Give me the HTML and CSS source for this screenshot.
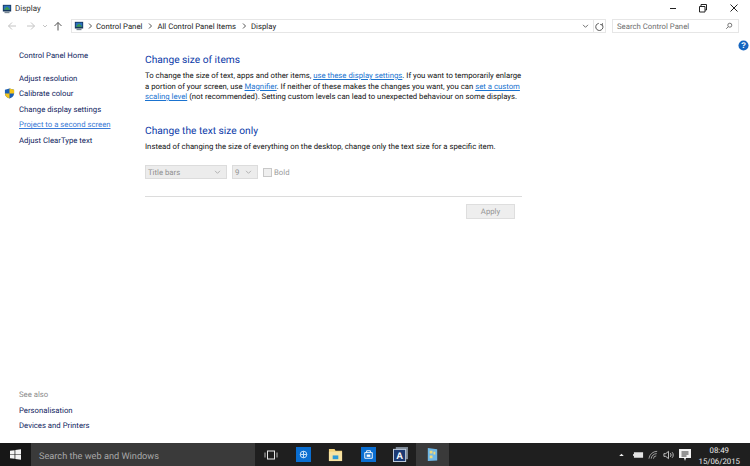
FILE: index.html

```html
<!DOCTYPE html>
<html lang="en">
<head>
<meta charset="UTF-8">
<meta name="viewport" content="width=device-width, initial-scale=1.0">
<title>Display</title>
<link rel="stylesheet" href="styles.css">
</head>
<body>

<div class="window">
    <div class="titlebar">
        <div class="title">
            <svg class="app-icon" viewBox="0 0 12 12"><rect x="1" y="1" width="10" height="8" fill="#17375e"/><rect x="2" y="2" width="8" height="5" fill="#2a6fc0"/><path d="M2 7L6 3l4 4z" fill="#3f9a4a"/><rect x="3" y="9" width="6" height="2" fill="#7a8794"/></svg>
            <span>Display</span>
        </div>
        <div class="win-controls">
            <svg viewBox="0 0 10 10"><path d="M3 5.5h6" stroke="#222" fill="none"/></svg>
            <svg viewBox="0 0 10 10"><path d="M1.500 3.500h5.500v5.500h-5.500zM3 3.500v-2h5.500v5.500h-1.500" stroke="#222" fill="none"/></svg>
            <svg viewBox="0 0 10 10"><path d="M1.500 1.500l7 7M8.500 1.500l-7 7" stroke="#222" fill="none"/></svg>
        </div>
    </div>

    <div class="navbar">
        <div class="nav-arrows">
            <svg class="arrow" viewBox="0 0 10 10"><path d="M9 5H1.500M5 1.500L1.500 5 5 8.500" stroke="#c4c4c4" fill="none"/></svg>
            <svg class="arrow" viewBox="0 0 10 10"><path d="M1 5h7.500M5 1.500L8.500 5 5 8.500" stroke="#c4c4c4" fill="none"/></svg>
            <svg class="arrow-small" viewBox="0 0 6 6"><path d="M1 2l2 2 2-2" stroke="#c4c4c4" fill="none"/></svg>
            <svg class="arrow" viewBox="0 0 10 10"><path d="M5 9.500V1.500M1.500 5L5 1.500 8.500 5" stroke="#555" fill="none"/></svg>
        </div>
        <div class="address">
            <svg class="app-icon" viewBox="0 0 12 12"><rect x="1" y="1" width="10" height="8" fill="#17375e"/><rect x="2" y="2" width="8" height="5" fill="#2a6fc0"/><path d="M2 7L6 3l4 4z" fill="#3f9a4a"/><rect x="3" y="9" width="6" height="2" fill="#7a8794"/></svg>
            <svg class="crumb-sep first-sep" viewBox="0 0 4 6"><path d="M1 .5L3.500 3 1 5.500" stroke="#555" fill="none"/></svg>
            <span>Control Panel</span>
            <svg class="crumb-sep" viewBox="0 0 4 6"><path d="M1 .5L3.500 3 1 5.500" stroke="#555" fill="none"/></svg>
            <span>All Control Panel Items</span>
            <svg class="crumb-sep" viewBox="0 0 4 6"><path d="M1 .5L3.500 3 1 5.500" stroke="#555" fill="none"/></svg>
            <span>Display</span>
            <svg class="addr-drop" viewBox="0 0 8 6"><path d="M1 1l3 3 3-3" stroke="#555" fill="none"/></svg>
        </div>
        <div class="refresh">
            <svg viewBox="0 0 10 10"><path d="M3 2a4 4 0 1 0 4 0M7 0.500v2h-2" stroke="#555" fill="none" transform="rotate(20 5 5)"/></svg>
        </div>
        <div class="search">
            <span>Search Control Panel</span>
            <svg viewBox="0 0 10 10"><circle cx="6" cy="4" r="2.500" stroke="#555" fill="none"/><path d="M4 6L1.500 8.500" stroke="#555" fill="none"/></svg>
        </div>
    </div>

    <div class="body-row">
        <aside class="sidebar">
            <div>
                <a class="side-link home-link">Control Panel Home</a>
                <a class="side-link">Adjust resolution</a>
                <a class="side-link shield-link">
                    <svg class="shield" viewBox="0 0 12 12"><path d="M6 .5L11 2v4c0 3-2.500 4.500-5 5.500C3.500 10.500 1 9 1 6V2z" fill="#1c5fb4"/><path d="M6 .5L11 2v4H6zM6 6v5.500C3.500 10.500 1 9 1 6z" fill="#f5c518"/></svg>
                    Calibrate colour
                </a>
                <a class="side-link">Change display settings</a>
                <a class="side-link hover-link">Project to a second screen</a>
                <a class="side-link">Adjust ClearType text</a>
            </div>
            <div>
                <div class="see-also">See also</div>
                <a class="side-link">Personalisation</a>
                <a class="side-link">Devices and Printers</a>
            </div>
        </aside>

        <main class="content">
            <h2>Change size of items</h2>
            <p>To change the size of text, apps and other items, <a>use these display settings</a>. If you want to temporarily enlarge<br>a portion of your screen, use <a>Magnifier</a>. If neither of these makes the changes you want, you can <a>set a custom</a><br><a>scaling level</a> (not recommended). Setting custom levels can lead to unexpected behaviour on some displays.</p>

            <h2 class="second">Change the text size only</h2>
            <p>Instead of changing the size of everything on the desktop, change only the text size for a specific item.</p>

            <div class="controls">
                <div class="select item-select"><span>Title bars</span><svg viewBox="0 0 8 6"><path d="M1 1l3 3 3-3" stroke="#a8a8a8" fill="none"/></svg></div>
                <div class="select size-select"><span>9</span><svg viewBox="0 0 8 6"><path d="M1 1l3 3 3-3" stroke="#a8a8a8" fill="none"/></svg></div>
                <span class="checkbox"></span>
                <span class="bold-label">Bold</span>
            </div>

            <div class="rule"></div>
            <div class="apply-row"><div class="apply">Apply</div></div>
        </main>

        <svg class="help" viewBox="0 0 12 12"><circle cx="6" cy="6" r="5.500" fill="#1565c0"/><text x="6" y="9.200" text-anchor="middle" font-size="9" font-weight="700" fill="#fff" font-family="Liberation Sans, sans-serif">?</text></svg>
    </div>
</div>

<footer class="taskbar">
    <div class="start">
        <svg viewBox="0 0 12 12"><path d="M0 2l5-.7v4.400H0zM5.800 1.200L12 .3v5.400H5.800zM0 6.300h5v4.400l-5-.7zM5.800 6.300H12v5.400l-6.200-.9z" fill="#f2f2f2"/></svg>
    </div>
    <div class="cortana">Search the web and Windows</div>
    <div class="task-icons">
        <div class="task-slot">
            <svg class="task-view" viewBox="0 0 14 10"><rect x="3.500" y="1" width="7" height="8" stroke="#e8e8e8" fill="none"/><path d="M1 2.500v5M13 2.500v5" stroke="#bbb" fill="none"/></svg>
        </div>
        <div class="task-slot">
            <svg viewBox="0 0 16 16"><rect width="16" height="16" fill="#0a6ed1"/><circle cx="8" cy="8" r="3.500" stroke="#cfe4fa" fill="none"/><path d="M4.500 8h7M8 4.500v7" stroke="#cfe4fa" fill="none"/></svg>
        </div>
        <div class="task-slot">
            <svg viewBox="0 0 16 16"><path d="M1 2h6l1 2h7v11H1z" fill="#f3d27a"/><rect x="1" y="5" width="14" height="10" fill="#f8e3a2"/><rect x="5" y="9" width="6" height="4" fill="#2f9bd8"/></svg>
        </div>
        <div class="task-slot">
            <svg viewBox="0 0 16 16"><rect width="16" height="16" fill="#0a6ed1"/><path d="M4 6h8v6H4zM6 6V4h4v2" stroke="#fff" fill="none"/><rect x="6" y="8" width="4" height="2.500" fill="#fff"/></svg>
        </div>
        <div class="task-slot">
            <svg viewBox="0 0 16 16"><rect x="3" y="0" width="13" height="13" fill="#7c8794"/><rect x="0.500" y="2.500" width="13" height="13" fill="#1c3a73" stroke="#c7d3e3"/><text x="7" y="12.500" text-anchor="middle" font-size="10" font-weight="700" fill="#fff" font-family="Liberation Sans, sans-serif">A</text></svg>
        </div>
        <div class="task-slot active-slot">
            <svg viewBox="0 0 16 16"><path d="M3 1l10 1.500v12L3 15z" fill="#6fb7e6"/><path d="M5 4h3v3H5zM9 5h2v3H9zM5 9h3v3H5z" fill="#f0d878"/></svg>
        </div>
    </div>
    <div class="tray">
        <svg class="tray-up" viewBox="0 0 6 4"><path d="M0 4l3-3 3 3z" fill="#eee"/></svg>
        <svg class="tray-icon" viewBox="0 0 12 8"><rect x="1" y="1" width="10" height="6" fill="#e4e4e4"/><rect y="3" width="1" height="2" fill="#e4e4e4"/></svg>
        <svg class="tray-icon" viewBox="0 0 12 10"><path d="M1 9a9 9 0 0 1 9-8M3.500 9a6 6 0 0 1 6-5.500M6 9a3 3 0 0 1 3-3" stroke="#aaa" fill="none"/></svg>
        <svg class="tray-icon" viewBox="0 0 12 10"><path d="M1 3.500h2l3-2.500v8L3 6.500H1zM8 3c1 1 1 3 0 4M10 2c1.500 1.500 1.500 4.500 0 6" stroke="#ccc" fill="none"/></svg>
        <svg class="tray-note" viewBox="0 0 12 12"><path d="M0 0h12v9H7l-1 3-1-3H0z" fill="#f2f2f2"/><path d="M2.500 3h7M2.500 5h7M2.500 7h5" stroke="#333" fill="none"/></svg>
        <div class="clock"><div>08:49</div><div>15/06/2015</div></div>
    </div>
</footer>

</body>
</html>
```

FILE: styles.css

```css
body { margin: 0; display: flex; flex-direction: column; height: 466px; overflow: hidden; background: #fff; font-family: 'Roboto', sans-serif; font-size: 7.75px; color: #1a1a1a; text-rendering: geometricPrecision; }
svg { display: block; }

.window { flex: 1; display: flex; flex-direction: column; min-height: 0; }

.titlebar { height: 16px; display: flex; justify-content: space-between; align-items: center; }
.title { display: flex; align-items: center; gap: 3px; padding-left: 2px; margin-top: 1px; color: #333; font-size: 8px; }
.app-icon { width: 10px; height: 10px; flex: none; }
.win-controls { display: flex; gap: 21px; padding-right: 11px; }
.win-controls svg { width: 10px; height: 10px; }

.navbar { height: 16px; margin-top: 2px; display: flex; align-items: center; }
.nav-arrows { display: flex; align-items: center; width: 71px; padding-left: 7px; box-sizing: border-box; }
.arrow { width: 10px; height: 10px; flex: none; }
.nav-arrows .arrow:nth-child(2) { margin-left: 9px; }
.arrow-small { width: 6px; height: 6px; margin: 0 5px 0 6px; }
.address { width: 523px; height: 14px; box-sizing: border-box; border: 1px solid #e6e6e6; display: flex; align-items: center; gap: 4px; padding-left: 2px; color: #222; }
.crumb-sep { width: 4px; height: 6px; margin: 0 1.5px; flex: none; }
.first-sep { margin: 0; }
.addr-drop { width: 7px; height: 5px; margin-left: auto; margin-right: 4px; }
.refresh { width: 12px; height: 14px; box-sizing: border-box; border: 1px solid #e6e6e6; border-left: 0; display: flex; align-items: center; justify-content: center; flex: none; }
.refresh svg { width: 9px; height: 9px; }
.search { width: 127px; height: 14px; box-sizing: border-box; margin-left: 6px; border: 1px solid #e6e6e6; display: flex; align-items: center; justify-content: space-between; padding: 0 5px 0 4px; color: #6d6d6d; flex: none; }
.search svg { width: 8px; height: 8px; }

.body-row { flex: 1; display: flex; min-height: 0; position: relative; }

.sidebar { width: 145px; flex: none; box-sizing: border-box; padding: 13.5px 0 9px 19px; display: flex; flex-direction: column; justify-content: space-between; }
.side-link { display: block; height: 15.6px; line-height: 15.6px; color: #10245e; white-space: nowrap; }
.home-link { margin-bottom: 7.5px; }
.shield-link { position: relative; }
.shield { position: absolute; left: -15px; top: 2px; width: 11px; height: 11px; }
.hover-link { color: #3a7ad6; text-decoration: underline; }
.see-also { height: 15.6px; line-height: 15.6px; color: #8a8a8a; }

.content { width: 377px; padding-top: 19px; }
h2 { margin: 0 0 2px; font-size: 10.2px; line-height: 16px; font-weight: 400; color: #0c3aa8; }
h2.second { margin-top: 21px; }
p { margin: 0; line-height: 10.5px; color: #111; white-space: nowrap; }
p a { color: #1a73d0; text-decoration: underline; }

.controls { display: flex; align-items: center; margin-top: 13px; color: #9a9a9a; }
.select { height: 14px; box-sizing: border-box; background: #ececec; border: 1px solid #dcdcdc; display: flex; align-items: center; justify-content: space-between; padding: 0 5px 0 2px; color: #8f8f8f; }
.select svg { width: 7px; height: 5px; }
.item-select { width: 82px; }
.size-select { width: 26px; margin-left: 5px; }
.checkbox { width: 9px; height: 9px; box-sizing: border-box; background: #efefef; border: 1px solid #c8c8c8; margin-left: 5px; }
.bold-label { margin-left: 2px; }

.rule { height: 1px; background: #dcdcdc; margin-top: 17px; }
.apply-row { display: flex; justify-content: flex-end; padding-right: 7px; margin-top: 7px; }
.apply { width: 49px; height: 15px; box-sizing: border-box; background: #eeeeee; border: 1px solid #dedede; color: #959595; text-align: center; line-height: 13px; }

.help { position: absolute; right: 1px; top: 6px; width: 11px; height: 11px; }

.taskbar { height: 23px; flex: none; background: #1f1f1f; display: flex; align-items: stretch; color: #eee; }
.start { width: 31px; background: #171717; display: flex; align-items: center; justify-content: center; }
.start svg { width: 11px; height: 11px; }
.cortana { width: 224px; background: #3a3a3a; color: #a8a8a8; font-size: 9.2px; line-height: 27px; padding-left: 8px; box-sizing: border-box; }
.task-icons { display: flex; }
.task-slot { width: 32.3px; display: flex; align-items: center; justify-content: center; }
.task-slot svg { width: 15px; height: 15px; }
.task-slot .task-view { width: 14px; height: 10px; }
.active-slot { background: #3a3a3a; }
.tray { margin-left: auto; display: flex; align-items: center; padding-right: 10px; }
.tray-up { width: 5px; height: 3px; margin-right: 9px; }
.tray-icon { width: 11px; height: 10px; margin-right: 4px; }
.tray-note { width: 12px; height: 12px; margin: 0 8px 0 1px; }
.clock { text-align: center; font-size: 7.8px; line-height: 11px; padding-top: 2px; }
```
